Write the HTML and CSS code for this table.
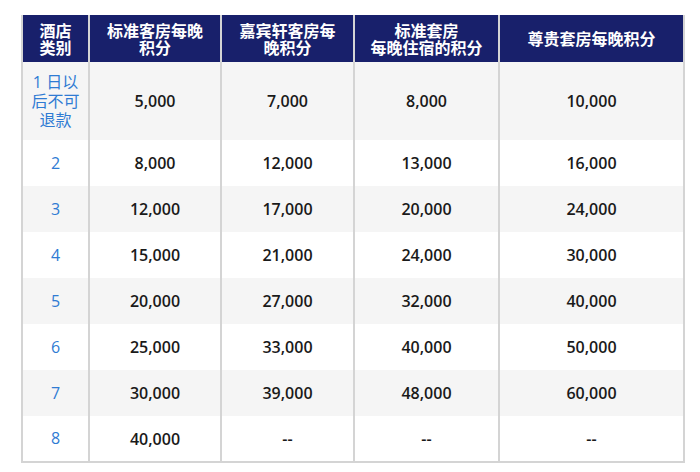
FILE: index.html
```html
<!DOCTYPE html>
<html lang="zh-CN">
<head>
<meta charset="utf-8">
<title>积分表</title>
<link rel="stylesheet" href="styles.css">
</head>
<body>
<div class="wrap">
<table class="pts">
  <colgroup>
    <col class="c1"><col class="c2"><col class="c3"><col class="c4"><col class="c5">
  </colgroup>
  <thead>
    <tr>
      <th>酒店<br>类别</th>
      <th>标准客房每晚<br>积分</th>
      <th>嘉宾轩客房每<br>晚积分</th>
      <th>标准套房<br>每晚住宿的积分</th>
      <th>尊贵套房每晚积分</th>
    </tr>
  </thead>
  <tbody>
    <tr class="first"><td class="cat">1 日以<br>后不可<br>退款</td><td>5,000</td><td>7,000</td><td>8,000</td><td>10,000</td></tr>
    <tr><td class="cat">2</td><td>8,000</td><td>12,000</td><td>13,000</td><td>16,000</td></tr>
    <tr><td class="cat">3</td><td>12,000</td><td>17,000</td><td>20,000</td><td>24,000</td></tr>
    <tr><td class="cat">4</td><td>15,000</td><td>21,000</td><td>24,000</td><td>30,000</td></tr>
    <tr><td class="cat">5</td><td>20,000</td><td>27,000</td><td>32,000</td><td>40,000</td></tr>
    <tr><td class="cat">6</td><td>25,000</td><td>33,000</td><td>40,000</td><td>50,000</td></tr>
    <tr><td class="cat">7</td><td>30,000</td><td>39,000</td><td>48,000</td><td>60,000</td></tr>
    <tr><td class="cat">8</td><td>40,000</td><td>--</td><td>--</td><td>--</td></tr>
  </tbody>
</table>
</div>
</body>
</html>
```
FILE: styles.css
```css
html, body {
  margin: 0;
  padding: 0;
  background: #ffffff;
}
.wrap {
  padding: 15px 17px 0 21px;
}
.pts {
  width: 662px;
  border-collapse: collapse;
  table-layout: fixed;
  font-family: "Open Sans", "Noto Sans CJK SC", sans-serif;
}
.c1 { width: 67px; }
.c2 { width: 132px; }
.c3 { width: 133px; }
.c4 { width: 145px; }
.c5 { width: 185px; }

.pts th {
  background: #18206b;
  color: #ffffff;
  font-family: "Noto Sans CJK SC", sans-serif;
  font-weight: 700;
  font-size: 16px;
  line-height: 17px;
  height: 47px;
  padding: 0 4px;
  text-align: center;
  vertical-align: middle;
  border-left: 2px solid #d4d4d4;
  border-right: 2px solid #d4d4d4;
  box-sizing: border-box;
}
.pts td {
  font-size: 16px;
  font-weight: 600;
  color: #1a1a1a;
  text-align: center;
  vertical-align: middle;
  height: 46px;
  padding: 0;
  border-left: 2px solid #d4d4d4;
  border-right: 2px solid #d4d4d4;
  box-sizing: border-box;
}
.pts tbody tr:nth-child(odd) td { background: #f5f5f5; }
.pts tbody tr:nth-child(even) td { background: #ffffff; }
.pts tbody tr:last-child td { border-bottom: 2px solid #d4d4d4; }
.pts tr.first td { height: 78px; }
.pts td.cat {
  color: #2f7bd3;
  font-weight: 400;
  font-family: "Open Sans", "Noto Sans CJK SC", sans-serif;
  line-height: 19px;
}
```
